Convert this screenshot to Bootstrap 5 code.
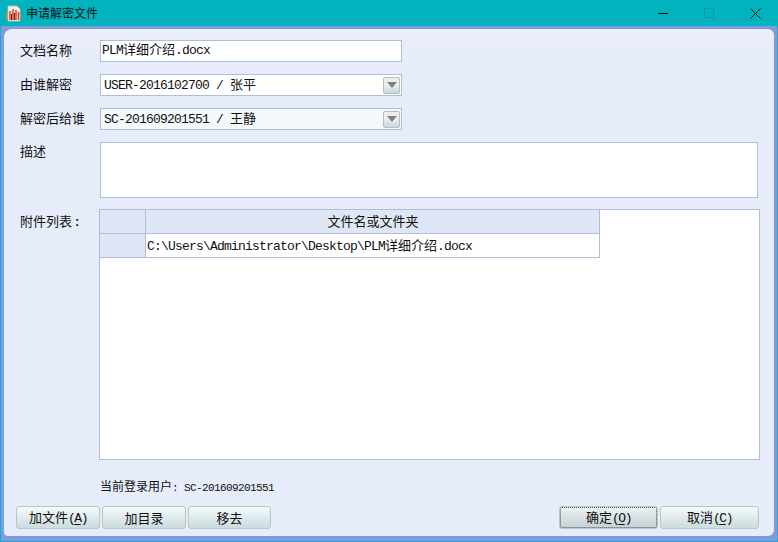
<!DOCTYPE html>
<html lang="zh"><head><meta charset="utf-8">
<link href="https://cdn.jsdelivr.net/npm/bootstrap@5.3.0/dist/css/bootstrap.min.css" rel="stylesheet">
<style>
html,body{margin:0;height:542px;overflow:hidden;background:#00b3bd}
body{font-family:"Noto Sans CJK SC","Liberation Sans",sans-serif;font-size:13px;color:#111;line-height:1}
.lat{font-family:"Liberation Mono",monospace;letter-spacing:-.8px;white-space:pre}
.win{height:542px;display:flex;flex-direction:column;border:solid #21a7d6;border-width:0 1px 1px}
.ttl{height:26px;background:#00b3bd;flex:none;padding-left:6px;gap:5px;font-size:12px;margin:0 -1px}
.ttl-ctl{width:46px;height:26px}
.frame{flex:1;background:#7f9bdb;padding:3px 3px 5px 3px}
.pane{height:100%;background:linear-gradient(#eaeefa,#e6ecf9 40px);border-radius:8px 6px 6px 4px;padding:11px 15px 6px 12px;display:flex;flex-direction:column}
.lbl{width:84px;padding:0 0 3px 4px;flex:none}
.lbl-top{padding-top:2px}
.lbl-top2{padding-top:5px}
.fld{width:302px;height:22px;background:#fff;border:1px solid #aebfdb;padding:0 1px 1px 1px;font-size:13px;color:#111;display:flex;align-items:center}
.fld.first{padding-bottom:4px}
.fld .lead-gap{margin-left:2px}
.fld.alt{background:#f3f9fb}
.rw{margin-bottom:12px;height:22px}
.arr{margin-left:auto;margin-top:1px;width:17px;height:17px;border:1px solid #b3bfb8;border-radius:2px;background:linear-gradient(#eeeeee 45%,#c5d8de);display:flex;align-items:center;justify-content:center}
.memo{height:56px;width:658px;background:#fff;border:1px solid #aebfdb;margin-bottom:11px}
.grid-wrap{width:661px;height:251px;margin-left:-1px;background:#fff;border:1px solid #aebfdb;flex:none}
.grid{width:500px;border-collapse:separate;border-spacing:0;table-layout:fixed;font-size:13px}
.grid td,.grid th{border:solid #aebfdb;border-width:0 1px 1px 0;height:24px;padding:0 0 0 1px;font-weight:400;color:#111}
.grid .hd{background:#dfe6f5;text-align:center;padding-bottom:2px}
.grid th:first-child,.grid .gut{width:46px;background:#dfe6f5}
.colon{font-family:"Liberation Sans",sans-serif;font-weight:700;margin-left:3px}
.who{font-size:12px;padding:1px 0 0 84px;height:14px;margin-top:19px}
.who .lat2{font-family:"Liberation Mono",monospace;font-size:11px;letter-spacing:-.6px;white-space:pre}
.bar{margin-top:13px;gap:2px}
.wb{height:23px;background:linear-gradient(#f5f9fb,#cbdbdf);border:1px solid #b9c7c0;border-radius:3px;font-size:13px;padding:0 0 1px;color:#111;line-height:1;--bs-btn-hover-bg:#e4eef1;--bs-btn-active-bg:#cbdbdf}
.w1{width:84px}.w2{width:83px}.w3{width:99px}
.wb.foc{background:linear-gradient(#eef2f4,#c3d0d4);outline:1px dotted #555;outline-offset:-2px}
.wb .lat{letter-spacing:-1.4px}
.wb u{text-underline-offset:2px}
</style></head><body>
<div class="win">
 <div class="ttl d-flex align-items-center">
  <svg width="15" height="17" viewBox="0 0 15 17"><path d="M2 1h9l3 3v12H2z" fill="#f6efe8" stroke="#cbbcae" stroke-width=".8"/><path d="M1 7v8" stroke="#f08a2c" stroke-width="1.6"/><path d="M4 6v9M7 4v11M10 5v10M12.500 7v8" stroke="#d8402a" stroke-width="1.5"/><path d="M5.500 9v6M8.500 8v7" stroke="#5a2a20" stroke-width="1"/></svg>
  <span>申请解密文件</span>
  <div class="ms-auto d-flex">
   <div class="ttl-ctl d-flex align-items-center justify-content-center"><svg width="10" height="10"><path d="M0 5.500h10" stroke="#111"/></svg></div>
   <div class="ttl-ctl d-flex align-items-center justify-content-center"><svg width="10" height="10"><path d="M.5.5h9v9h-9z" fill="none" stroke="#059aa3"/></svg></div>
   <div class="ttl-ctl d-flex align-items-center justify-content-center"><svg width="11" height="11"><path d="M.5.5l10 10M10.500.5l-10 10" stroke="#111"/></svg></div>
  </div>
 </div>
 <div class="frame"><div class="pane">
  <div class="rw d-flex align-items-center"><div class="lbl">文档名称</div><div class="fld first"><span><span class="lat">PLM</span>详细介绍<span class="lat">.docx</span></span></div></div>
  <div class="rw d-flex align-items-center"><div class="lbl">由谁解密</div><div class="fld"><span class="lead-gap"><span class="lat">USER-2016102700 / </span>张平</span><span class="arr"><svg width="10" height="6"><path d="M0 0h10L5 6z" fill="#7f7f7f"/></svg></span></div></div>
  <div class="rw d-flex align-items-center"><div class="lbl">解密后给谁</div><div class="fld alt"><span class="lead-gap"><span class="lat">SC-201609201551 / </span>王静</span><span class="arr"><svg width="10" height="6"><path d="M0 0h10L5 6z" fill="#7f7f7f"/><path d="M6 6l3-3" stroke="#fff"/></svg></span></div></div>
  <div class="d-flex"><div class="lbl lbl-top">描述</div><div class="memo"></div></div>
  <div class="d-flex"><div class="lbl lbl-top2">附件列表<span class="colon">:</span></div>
   <div class="grid-wrap"><table class="grid"><tr><th></th><th class="hd">文件名或文件夹</th></tr><tr><td class="gut"></td><td><span class="lat">C:\Users\Administrator\Desktop\PLM</span>详细介绍<span class="lat">.docx</span></td></tr></table></div>
  </div>
  <div class="who">当前登录用户<span class="lat2">: SC-201609201551</span></div>
  <div class="bar d-flex">
   <button class="btn wb w1">加文件<span class="lat">(<u>A</u>)</span></button><button class="btn wb w1">加目录</button><button class="btn wb w2">移去</button>
   <button class="btn wb w3 foc ms-auto">确定<span class="lat">(<u>O</u>)</span></button><button class="btn wb w3">取消<span class="lat">(<u>C</u>)</span></button>
  </div>
 </div></div>
</div>
</body></html>
